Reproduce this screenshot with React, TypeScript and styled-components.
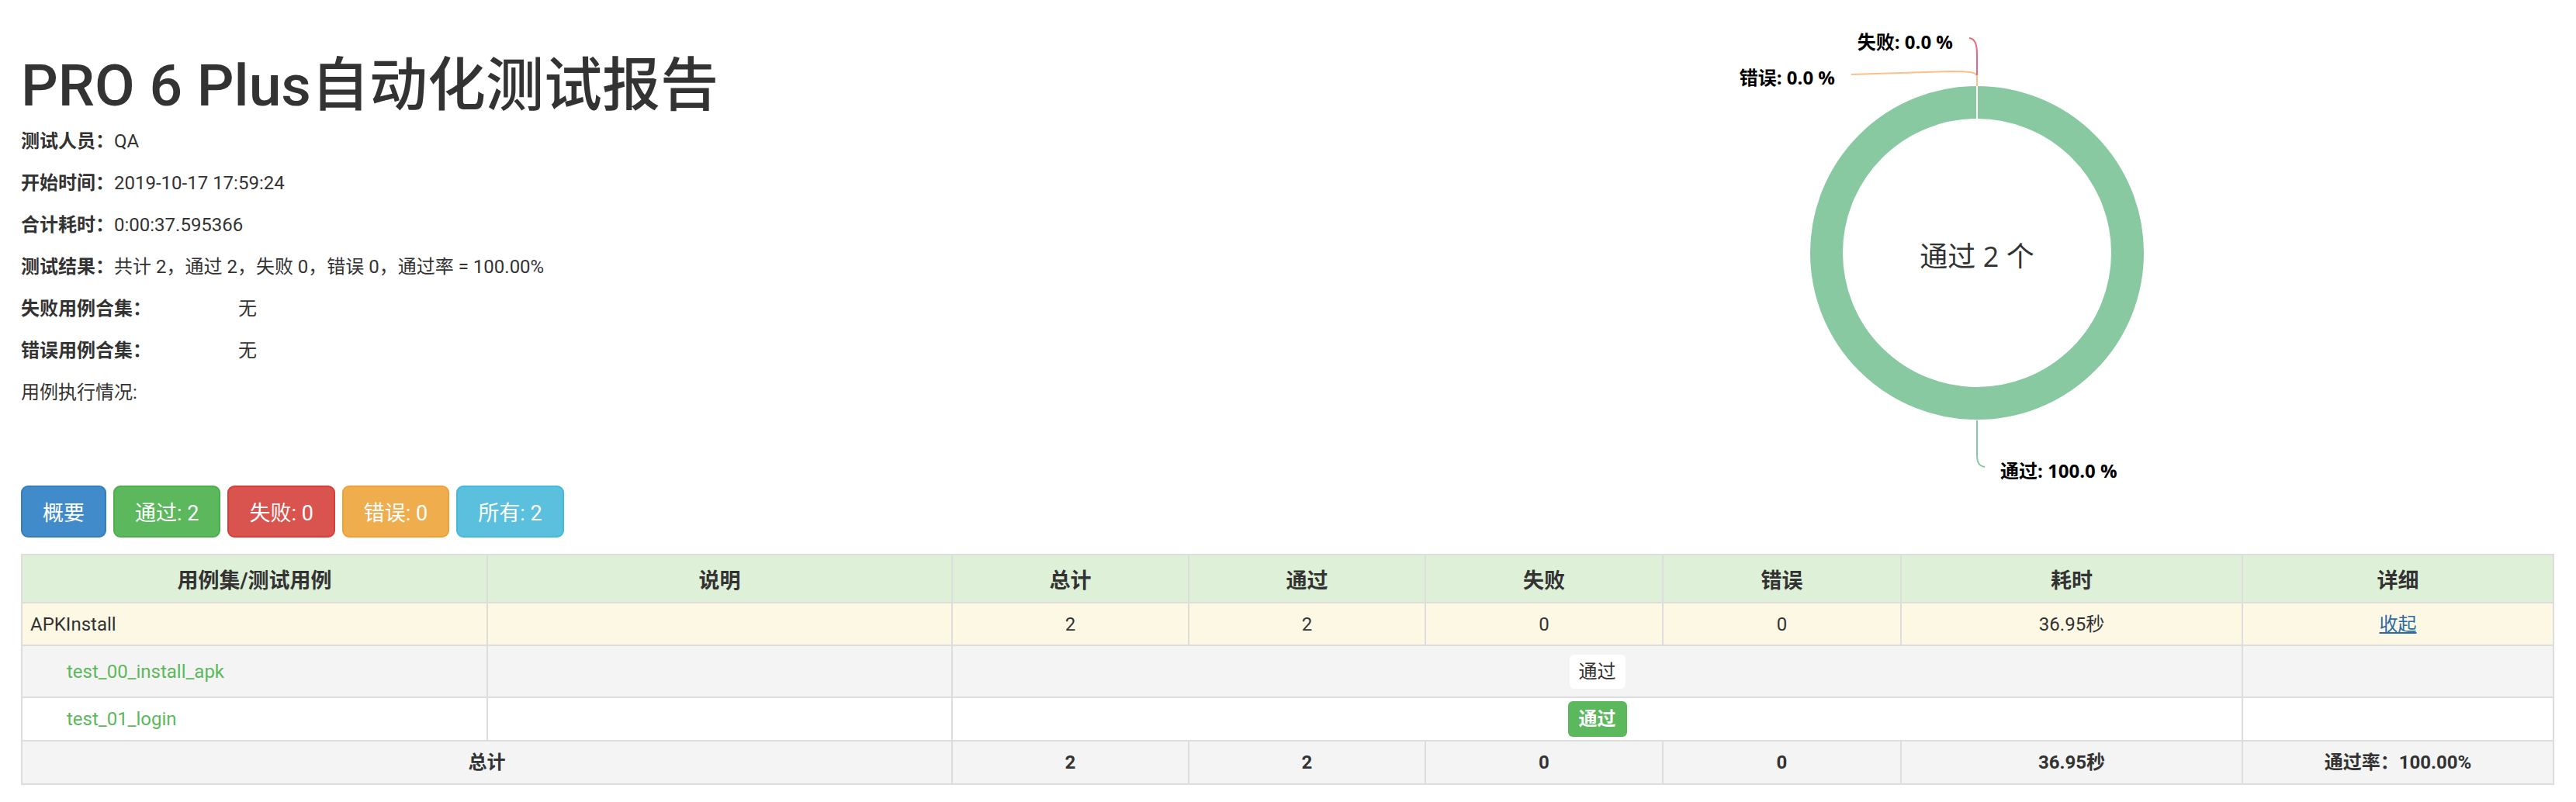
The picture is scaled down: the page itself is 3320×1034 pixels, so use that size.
import React from "react";
import styled, { createGlobalStyle } from "styled-components";

type Tone = "primary" | "success" | "danger" | "warning" | "info";

const tones: Record<Tone, [string, string]> = {
  primary: ["#428bca", "#357ebd"],
  success: ["#5cb85c", "#4cae4c"],
  danger: ["#d9534f", "#d43f3a"],
  warning: ["#f0ad4e", "#eea236"],
  info: ["#5bc0de", "#46b8da"],
};

const GlobalStyle = createGlobalStyle`
  html, body {
    margin: 0;
    padding: 0;
    background: #fff;
  }
  body {
    font-family: Roboto, "Noto Sans CJK SC", sans-serif;
    font-size: 24px;
    color: #333;
  }
`;

const Page = styled.div`
  padding: 0 30px 20px 27px;
`;

const Header = styled.div`
  display: flex;
  align-items: flex-start;
  justify-content: space-between;
`;

const Intro = styled.div`
  padding-top: 65px;
`;

const Title = styled.h1`
  margin: 0 0 9px;
  font-size: 75px;
  line-height: 90px;
  font-weight: 500;
  color: #333;
`;

const Line = styled.p`
  margin: 0 0 18px;
  font-size: 24px;
  line-height: 36px;
`;

const Label = styled.strong`
  font-weight: 700;
`;

const None = styled.span`
  margin-left: 112px;
`;

const Chart = styled.svg`
  display: block;
  flex: none;
  width: 900px;
  height: 626px;
  margin-right: 292px;
`;

const ChartLabel = styled.text`
  font-family: "Open Sans", "Noto Sans CJK SC", sans-serif;
  font-size: 24px;
  font-weight: 700;
  fill: #000;
`;

const ChartCenter = styled.text`
  font-family: "Open Sans", "Noto Sans CJK SC", sans-serif;
  font-size: 36px;
  fill: #333;
`;

const Filters = styled.div`
  display: flex;
  gap: 9px;
`;

const FilterButton = styled.button<{ $tone: Tone }>`
  height: 67px;
  padding: 0 26px;
  border: 2px solid ${(p) => tones[p.$tone][1]};
  border-radius: 9px;
  background: ${(p) => tones[p.$tone][0]};
  color: #fff;
  font-family: Roboto, "Noto Sans CJK SC", sans-serif;
  font-size: 27px;
  cursor: pointer;
`;

const Report = styled.table`
  width: 100%;
  margin-top: 21px;
  table-layout: fixed;
  border-collapse: collapse;
  border: 2px solid #ddd;
`;

const Row = styled.tr<{ $bg: string; $h: number }>`
  background: ${(p) => p.$bg};
  height: ${(p) => p.$h}px;
`;

const Head = styled.th`
  border: 2px solid #ddd;
  padding: 0 10px;
  font-size: 27px;
  font-weight: 700;
  text-align: center;
  vertical-align: middle;
`;

const Cell = styled.td<{ $align?: "left" | "center"; $bold?: boolean; $indent?: number }>`
  border: 2px solid #ddd;
  padding: 0 10px 0 ${(p) => p.$indent ?? 10}px;
  font-size: 24px;
  line-height: 30px;
  font-weight: ${(p) => (p.$bold ? 700 : 400)};
  text-align: ${(p) => p.$align ?? "center"};
  vertical-align: middle;
`;

const CaseName = styled.span`
  color: #5cb85c;
`;

const Toggle = styled.a`
  color: #2a6aa6;
  text-decoration: underline;
  cursor: pointer;
`;

const Badge = styled.span<{ $solid?: boolean }>`
  display: inline-block;
  padding: 0 ${(p) => (p.$solid ? 14 : 12)}px;
  line-height: ${(p) => (p.$solid ? 46 : 44)}px;
  border-radius: 6px;
  font-size: 24px;
  font-weight: ${(p) => (p.$solid ? 700 : 400)};
  background: ${(p) => (p.$solid ? "#5cb85c" : "#fff")};
  color: ${(p) => (p.$solid ? "#fff" : "#333")};
`;

const columns = [600, 599, 305, 305, 306, 307, 440, 401];

const PassChart = () => (
  <Chart viewBox="0 0 900 626">
    <circle cx="450" cy="326" r="194" fill="none" stroke="#88c9a1" strokeWidth="42" />
    <line x1="450" y1="110" x2="450" y2="154" stroke="#fff" strokeWidth="2" />
    <path d="M450 111 L450 99 C450 93 441 92 416 92 L288 96" fill="none" stroke="#fcc08a" strokeWidth="2" />
    <path d="M440 49 C447 50 450 56 450 70 L450 97" fill="none" stroke="#e8697d" strokeWidth="2" />
    <path d="M450 542 L450 586 C450 597 453 601 460 602" fill="none" stroke="#88c9a1" strokeWidth="2" />
    <ChartLabel x="419" y="63" textAnchor="end">失败: 0.0 %</ChartLabel>
    <ChartLabel x="267" y="109" textAnchor="end">错误: 0.0 %</ChartLabel>
    <ChartLabel x="480" y="616">通过: 100.0 %</ChartLabel>
    <ChartCenter x="450" y="344" textAnchor="middle">通过 2 个</ChartCenter>
  </Chart>
);

export default function App() {
  return (
    <Page>
      <GlobalStyle />
      <Header>
        <Intro>
          <Title>PRO 6 Plus自动化测试报告</Title>
          <Line>
            <Label>测试人员：</Label>QA
          </Line>
          <Line>
            <Label>开始时间：</Label>2019-10-17 17:59:24
          </Line>
          <Line>
            <Label>合计耗时：</Label>0:00:37.595366
          </Line>
          <Line>
            <Label>测试结果：</Label>共计 2，通过 2，失败 0，错误 0，通过率 = 100.00%
          </Line>
          <Line>
            <Label>失败用例合集：</Label>
            <None>无</None>
          </Line>
          <Line>
            <Label>错误用例合集：</Label>
            <None>无</None>
          </Line>
          <Line>用例执行情况:</Line>
        </Intro>
        <PassChart />
      </Header>

      <Filters>
        <FilterButton $tone="primary">概要</FilterButton>
        <FilterButton $tone="success">通过: 2</FilterButton>
        <FilterButton $tone="danger">失败: 0</FilterButton>
        <FilterButton $tone="warning">错误: 0</FilterButton>
        <FilterButton $tone="info">所有: 2</FilterButton>
      </Filters>

      <Report>
        <colgroup>
          {columns.map((w, i) => (
            <col key={i} style={{ width: w }} />
          ))}
        </colgroup>
        <thead>
          <Row $bg="#dff0d8" $h={62}>
            <Head>用例集/测试用例</Head>
            <Head>说明</Head>
            <Head>总计</Head>
            <Head>通过</Head>
            <Head>失败</Head>
            <Head>错误</Head>
            <Head>耗时</Head>
            <Head>详细</Head>
          </Row>
        </thead>
        <tbody>
          <Row $bg="#fcf8e3" $h={55}>
            <Cell $align="left">APKInstall</Cell>
            <Cell />
            <Cell>2</Cell>
            <Cell>2</Cell>
            <Cell>0</Cell>
            <Cell>0</Cell>
            <Cell>36.95秒</Cell>
            <Cell>
              <Toggle>收起</Toggle>
            </Cell>
          </Row>
          <Row $bg="#f4f4f4" $h={67}>
            <Cell $align="left" $indent={57}>
              <CaseName>test_00_install_apk</CaseName>
            </Cell>
            <Cell />
            <Cell colSpan={5}>
              <Badge>通过</Badge>
            </Cell>
            <Cell />
          </Row>
          <Row $bg="#fff" $h={56}>
            <Cell $align="left" $indent={57}>
              <CaseName>test_01_login</CaseName>
            </Cell>
            <Cell />
            <Cell colSpan={5}>
              <Badge $solid>通过</Badge>
            </Cell>
            <Cell />
          </Row>
          <Row $bg="#f4f4f4" $h={56}>
            <Cell colSpan={2} $bold>
              总计
            </Cell>
            <Cell $bold>2</Cell>
            <Cell $bold>2</Cell>
            <Cell $bold>0</Cell>
            <Cell $bold>0</Cell>
            <Cell $bold>36.95秒</Cell>
            <Cell $bold>通过率：100.00%</Cell>
          </Row>
        </tbody>
      </Report>
    </Page>
  );
}
